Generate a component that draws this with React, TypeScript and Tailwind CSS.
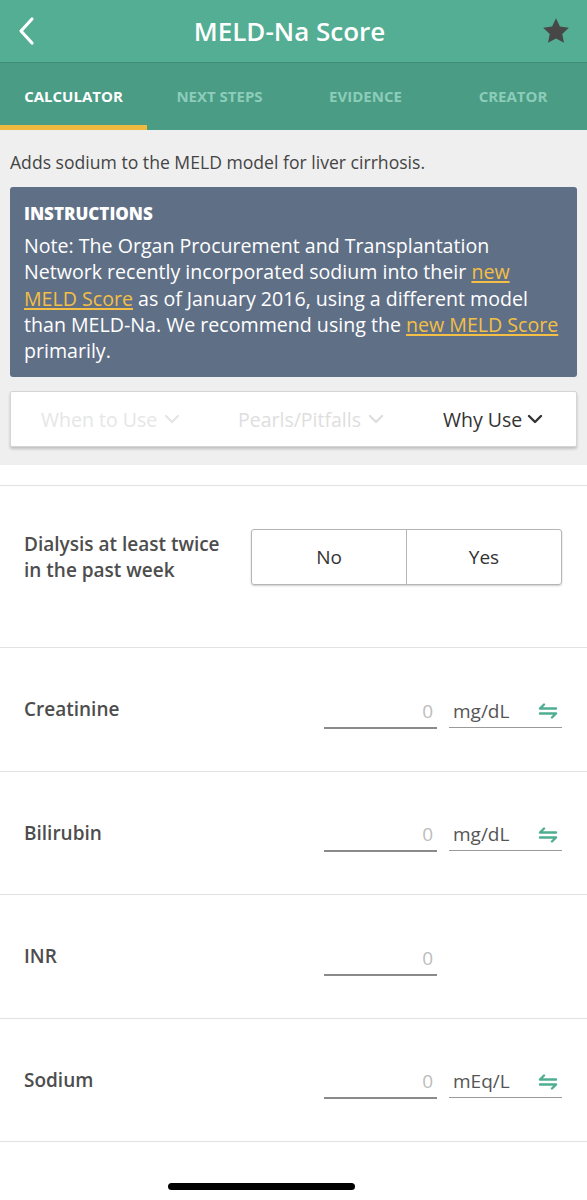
import React from "react";

const font = { fontFamily: '"Open Sans", "Noto Sans", sans-serif' };

function Swap() {
  return (
    <svg width="20" height="16" viewBox="0 0 20 16" fill="none" stroke="#4fae92" strokeWidth="2.4" strokeLinecap="round" strokeLinejoin="round">
      <path d="M2 5.5h16M2 5.5l4-4" />
      <path d="M18 10.5H2M18 10.5l-4 4" />
    </svg>
  );
}

function Chevron({ color }: { color: string }) {
  return (
    <svg width="16" height="10" viewBox="0 0 16 10" fill="none" stroke={color} strokeWidth="2.4" strokeLinecap="round" strokeLinejoin="round">
      <path d="M2 2l6 6 6-6" />
    </svg>
  );
}

function NumRow({ label, unit }: { label: string; unit?: string }) {
  return (
    <div className="flex h-[123.5px] items-center border-b border-[#e2e2e2] pl-6 pr-[25px]">
      <div className="flex-1 text-[19px] font-semibold text-[#4d4d4d]">{label}</div>
      <div className="mt-[4px] flex w-[113px] justify-end border-b-2 border-[#8a8a8a] pr-1 pb-0 text-[19px] leading-[32px] text-[#bdbdbd]">0</div>
      <div className="mt-[4px] ml-3 w-[113px]">
        {unit && (
          <div className="flex items-center justify-between border-b border-[#9a9a9a] pl-1 pr-1 text-[19px] leading-[31px] text-[#555]">
            <span>{unit}</span>
            <Swap />
          </div>
        )}
      </div>
    </div>
  );
}

const link = "text-[#f3bf45] underline decoration-[#f3bf45] decoration-2 underline-offset-2";

export default function App() {
  return (
    <div className="relative h-[1200px] w-[587px] overflow-hidden bg-white" style={font}>
      <div className="flex h-[62px] items-center justify-between bg-[#53ae94] px-4">
        <svg width="22" height="30" viewBox="0 0 22 30" fill="none" stroke="white" strokeWidth="3.2" strokeLinecap="round" strokeLinejoin="round">
          <path d="M16 3L5 15l11 12" />
        </svg>
        <div className="text-[26px] font-semibold text-white">MELD-Na Score</div>
        <svg width="30" height="30" viewBox="0 0 24 24" fill="#474747">
          <path d="M12 1.8l3.1 6.6 7.2.9-5.3 5 1.4 7.1L12 17.9l-6.4 3.5L7 14.3l-5.3-5 7.2-.9z" />
        </svg>
      </div>
      <div className="flex h-[68px] border-t border-[#3f8d78] bg-[#4a9c85] text-[15px] font-bold">
        <div className="relative flex w-[147px] items-center justify-center text-white">
          CALCULATOR
          <div className="absolute bottom-0 left-0 h-[5px] w-full bg-[#f0b93f]" />
        </div>
        <div className="flex w-[145px] items-center justify-center text-[#8ccdb9]">NEXT STEPS</div>
        <div className="flex w-[147px] items-center justify-center text-[#8ccdb9]">EVIDENCE</div>
        <div className="flex flex-1 items-center justify-center text-[#8ccdb9]">CREATOR</div>
      </div>
      <div className="bg-[#efefef] px-[10px] pb-[18px]">
        <div className="pt-[19px] pb-[12px] text-[17.6px] leading-[26px] text-[#444]">Adds sodium to the MELD model for liver cirrhosis.</div>
        <div className="rounded-[3px] bg-[#5f6f86] pl-[14px] pr-[6px] pt-[16px] pb-[13px] text-white">
          <div className="text-[17px] font-extrabold leading-[22px]">INSTRUCTIONS</div>
          <div className="mt-[8px] whitespace-nowrap text-[19.6px] leading-[26.3px]">
            Note: The Organ Procurement and Transplantation
            <br />
            Network recently incorporated sodium into their <span className={link}>new</span>
            <br />
            <span className={link}>MELD Score</span> as of January 2016, using a different model
            <br />
            than MELD-Na. We recommend using the <span className={link}>new MELD Score</span>
            <br />
            primarily.
          </div>
        </div>
        <div className="mt-[14px] flex h-[56px] items-center rounded-[2px] border border-[#d5d5d5] bg-white text-[19.5px] shadow-[0_2px_3px_rgba(0,0,0,0.2)]">
          <div className="flex w-[197px] items-center gap-[7px] pl-[30px] text-[#e6e6e6]">
            When to Use <Chevron color="#e6e6e6" />
          </div>
          <div className="flex w-[205px] items-center gap-[7px] pl-[30px] text-[#dedede]">
            Pearls/Pitfalls <Chevron color="#dedede" />
          </div>
          <div className="flex flex-1 items-center gap-[5px] pl-[30px] text-[#333]">
            Why Use <Chevron color="#333" />
          </div>
        </div>
      </div>
      <div className="h-[21px] border-b border-[#e2e2e2]" />
      <div className="flex h-[162px] items-center border-b border-[#e2e2e2] pb-[20px] pl-6 pr-[25px]">
        <div className="w-[210px] text-[19px] font-semibold leading-[26px] text-[#4d4d4d]">Dialysis at least twice in the past week</div>
        <div className="ml-auto flex h-[56px] w-[311px] overflow-hidden rounded-[3px] border border-[#b5b5b5] shadow-[0_1px_2px_rgba(0,0,0,0.2)] text-[19px] text-[#333]">
          <div className="flex flex-1 items-center justify-center border-r border-[#b5b5b5]">No</div>
          <div className="flex flex-1 items-center justify-center">Yes</div>
        </div>
      </div>
      <NumRow label="Creatinine" unit="mg/dL" />
      <NumRow label="Bilirubin" unit="mg/dL" />
      <NumRow label="INR" />
      <NumRow label="Sodium" unit="mEq/L" />
      <div className="absolute bottom-[10px] left-[168px] h-[7px] w-[187px] rounded-full bg-black" />
    </div>
  );
}
